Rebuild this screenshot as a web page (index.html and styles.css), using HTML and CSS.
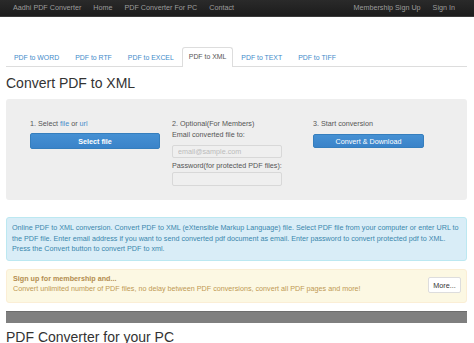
FILE: index.html
```html
<!DOCTYPE html>
<html lang="en">
<head>
  <meta charset="UTF-8" />
  <title>Convert PDF to XML</title>
  <link rel="stylesheet" href="styles.css">
</head>
<body>

<nav class="navbar">
  <div class="nav-left">
    <a href="#" class="brand">Aadhi PDF Converter</a>
    <a href="#">Home</a>
    <a href="#">PDF Converter For PC</a>
    <a href="#">Contact</a>
  </div>
  <div class="nav-right">
    <a href="#">Membership Sign Up</a>
    <a href="#">Sign In</a>
  </div>
</nav>

<div class="container">
  <ul class="tabs">
    <li><a href="#">PDF to WORD</a></li>
    <li><a href="#">PDF to RTF</a></li>
    <li><a href="#">PDF to EXCEL</a></li>
    <li class="active"><a href="#">PDF to XML</a></li>
    <li><a href="#">PDF to TEXT</a></li>
    <li><a href="#">PDF to TIFF</a></li>
  </ul>

  <h1 class="page-title">Convert PDF to XML</h1>

  <div class="panel">
    <div class="col col-file">
      <div class="label">1. Select <a href="#">file</a> or <a href="#">url</a></div>
      <button class="btn-blue btn-select">Select file</button>
    </div>
    <div class="col col-opt">
      <div class="label">2. Optional(For Members)</div>
      <div class="label">Email converted file to:</div>
      <input class="field field-email" type="text" placeholder="email@sample.com">
      <div class="label">Password(for protected PDF files):</div>
      <input class="field field-pass" type="password">
    </div>
    <div class="col col-start">
      <div class="label">3. Start conversion</div>
      <button class="btn-blue btn-convert">Convert &amp; Download</button>
    </div>
  </div>

  <div class="info-box">
    Online PDF to XML conversion. Convert PDF to XML (eXtensible Markup Language) file. Select PDF file from your computer or enter URL to<br>
    the PDF file. Enter email address if you want to send converted pdf document as email. Enter password to convert protected pdf to XML.<br>
    Press the Convert button to convert PDF to xml.
  </div>

  <div class="warn-box">
    <div class="warn-text">
      <strong>Sign up for membership and...</strong><br>
      Convert unlimited number of PDF files, no delay between PDF conversions, convert all PDF pages and more!
    </div>
    <button class="btn-more">More...</button>
  </div>

  <div class="gray-bar"></div>

  <h2 class="section-title">PDF Converter for your PC</h2>
</div>

</body>
</html>
```

FILE: styles.css
```css
:root {
  --blue: #428bca;
  --text: #555;
  --panel: #eeeeee;
}

body {
  margin: 0;
  font-family: 'Liberation Sans', Arial, sans-serif;
  font-size: 7.2px;
  color: var(--text);
  background: #fff;
}

a {
  text-decoration: none;
}

/* top bar */
.navbar {
  display: flex;
  justify-content: space-between;
  height: 17px;
  background: linear-gradient(#2a2a2a, #1c1c1c);
  border-bottom: 1px solid #3a3a3a;
  padding: 0 13px 0 7px;
  box-sizing: border-box;
}

.navbar a {
  color: #9d9d9d;
  line-height: 16px;
  padding: 0 6px;
}

.nav-left,
.nav-right {
  display: flex;
}

.container {
  padding: 0 7px 0 6px;
}

/* tabs */
.tabs {
  list-style: none;
  margin: 30px 0 0;
  padding: 0;
  display: flex;
  border-bottom: 1px solid #ddd;
  height: 19px;
  font-size: 6.9px;
}

.tabs li a {
  display: block;
  padding: 0 7px;
  line-height: 19px;
  color: var(--blue);
  border: 1px solid transparent;
  border-bottom: none;
  border-radius: 3px 3px 0 0;
}

.tabs li.active a {
  color: #555;
  background: #fff;
  border-color: #ddd;
  line-height: 18px;
  height: 19px;
  padding: 0 6px;
}

.page-title {
  font-size: 14px;
  font-weight: normal;
  color: #333;
  line-height: 16px;
  margin: 8px 0 8px;
}

/* converter panel */
.panel {
  display: flex;
  background: var(--panel);
  border-radius: 3px;
  padding: 19px 24px 13px;
  height: 101px;
  box-sizing: border-box;
}

.col {
  display: flex;
  flex-direction: column;
  align-items: flex-start;
}

.col-file {
  width: 142px;
}

.col-opt {
  width: 141px;
}

.label {
  line-height: 11px;
  color: #555;
}

.label a {
  color: var(--blue);
}

.btn-blue {
  font-family: inherit;
  font-size: 7.2px;
  font-weight: bold;
  color: #fff;
  background: linear-gradient(#4590d3, #3a83c9);
  border: 1px solid #357ebd;
  border-radius: 2px;
  padding: 0;
  cursor: pointer;
}

.btn-select {
  width: 130px;
  height: 16px;
  margin-top: 4px;
}

.btn-convert {
  width: 111px;
  height: 14px;
  margin-top: 5px;
  font-weight: normal;
}

.field {
  width: 110px;
  box-sizing: border-box;
  border: 1px solid #d8d8d8;
  border-radius: 2px;
  background: #efefef;
  font-family: inherit;
  font-size: 7.2px;
  padding: 0 5px;
}

.field::placeholder {
  color: #bbb;
}

.field-email {
  height: 13px;
  margin: 5px 0 2px;
}

.field-pass {
  height: 14px;
  margin-top: 1px;
}

/* messages */
.info-box {
  margin-top: 17px;
  background: #d9edf7;
  border: 1px solid #bce8f1;
  border-radius: 3px;
  color: #3a87ad;
  padding: 5px;
  line-height: 10.5px;
  white-space: nowrap;
}

.warn-box {
  display: flex;
  align-items: center;
  justify-content: space-between;
  margin-top: 8px;
  background: #fcf8e3;
  border: 1px solid #fbeed5;
  border-radius: 3px;
  color: #c09853;
  padding: 4px 5px 8px 6px;
  line-height: 10px;
}

.warn-text strong {
  color: #b38d4f;
}

.btn-more {
  font-family: inherit;
  font-size: 7.2px;
  color: #333;
  background: #fff;
  border: 1px solid #ddd;
  border-radius: 2px;
  width: 33px;
  height: 16px;
  padding: 0;
  margin-top: 3px;
}

.gray-bar {
  margin-top: 8px;
  height: 12px;
  background: #7f7f7f;
  border-top: 1px solid #6c6c6c;
  box-sizing: border-box;
}

.section-title {
  font-size: 14px;
  font-weight: normal;
  color: #333;
  line-height: 16px;
  margin: 6px 0 0;
}
```
